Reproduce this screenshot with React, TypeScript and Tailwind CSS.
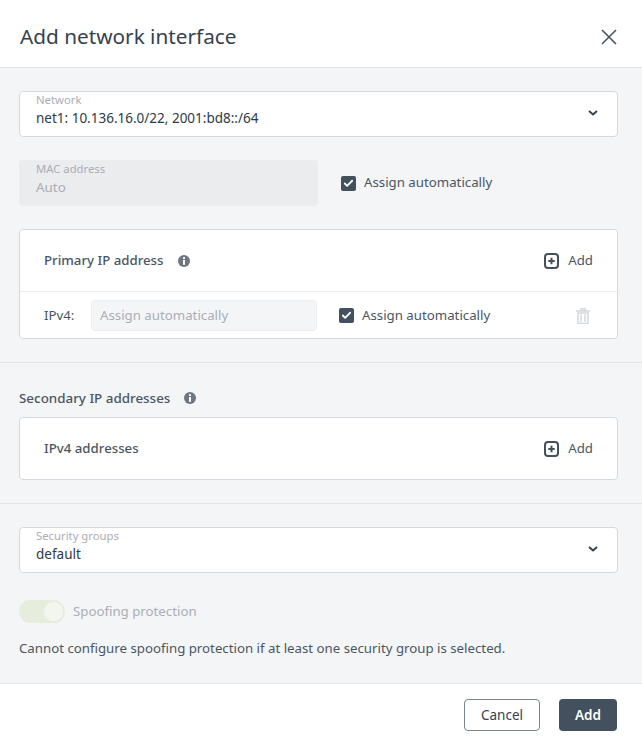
import React from "react";
import { Check } from "lucide-react";

const labelColor = "text-[#a9aeb6]";
const bodyText = "text-[13.25px] text-[#4b5663]";

const SelectField = ({ label, value }: { label: string; value: string }) => (
  <div className="h-[46px] bg-white border border-[#d5d9df] rounded-[4px] pl-4 pr-[19px] flex items-center justify-between">
    <div className="flex flex-col self-start pt-[1px]">
      <span className={`text-[11.3px] leading-[14px] ${labelColor}`}>{label}</span>
      <span className="mt-[1px] text-[13.5px] leading-[20px] text-[#2f3a45]">{value}</span>
    </div>
    <svg width="10" height="6" viewBox="0 0 10 6" className="text-[#36414e] -mt-[2px]">
      <path d="M1 1l4 3.5L9 1" fill="none" stroke="currentColor" strokeWidth="2" />
    </svg>
  </div>
);

const Checked = ({ text }: { text: string }) => (
  <div className="flex items-center gap-2">
    <span className="w-[15px] h-[15px] rounded-[2px] bg-[#43505e] flex items-center justify-center">
      <Check className="w-[11px] h-[11px] text-white" strokeWidth={4} />
    </span>
    <span className={bodyText}>{text}</span>
  </div>
);

const InfoDot = () => (
  <svg width="12" height="12" viewBox="0 0 12 12">
    <circle cx="6" cy="6" r="6" fill="#6d7681" />
    <rect x="5" y="2.2" width="2" height="1.8" fill="#fff" />
    <rect x="5" y="5" width="2" height="4.8" fill="#fff" />
  </svg>
);

const AddButton = () => (
  <div className="flex items-center gap-[9px]">
    <svg width="15" height="16" viewBox="0 0 15 16" className="text-[#43505e]">
      <rect x="1" y="1" width="13" height="14" rx="3" fill="none" stroke="currentColor" strokeWidth="2" />
      <path d="M7.5 4.8v6.4M4.3 8h6.4" fill="none" stroke="currentColor" strokeWidth="2" />
    </svg>
    <span className={bodyText}>Add</span>
  </div>
);

const TrashIcon = () => (
  <svg width="14" height="16" viewBox="0 0 14 16" className="ml-auto mr-[3px] text-[#d3d7dc]">
    <path d="M0 3h14M5 3V1h4v2" fill="none" stroke="currentColor" strokeWidth="1.5" />
    <path d="M2 5h10v10.5H2z M5 6.5v7.5M9 6.5v7.5" fill="none" stroke="currentColor" strokeWidth="1.5" />
  </svg>
);

export default function App() {
  return (
    <div className="w-[642px] h-[750px] flex flex-col bg-white font-['Noto_Sans',sans-serif]">
      <div className="h-[68px] shrink-0 pt-[7px] border-b border-[#e0e3e8] flex items-center justify-between pl-5 pr-[25px]">
        <h1 className="text-[20.75px] text-[#36414e] -mt-[1px]">Add network interface</h1>
        <svg width="16" height="16" viewBox="0 0 16 16" className="text-[#43505e]">
          <path d="M1 1l14 14M15 1L1 15" fill="none" stroke="currentColor" strokeWidth="1.5" />
        </svg>
      </div>

      <div className="flex-1 bg-[#f4f5f7] flex flex-col">
        <div className="pl-[19px] pr-[24px] pt-[23px] pb-[23px] border-b border-[#e3e5e9]">
          <SelectField label="Network" value="net1: 10.136.16.0/22, 2001:bd8::/64" />

          <div className="mt-[23px] flex items-center gap-[23px]">
            <div className="w-[299px] h-[46px] bg-[#ebecee] rounded-[4px] pl-[17px] pt-[2px] flex flex-col">
              <span className={`text-[11.3px] leading-[14px] ${labelColor}`}>MAC address</span>
              <span className={`mt-[1px] text-[13.4px] leading-[20px] ${labelColor}`}>Auto</span>
            </div>
            <Checked text="Assign automatically" />
          </div>

          <div className="mt-[23px] bg-white border border-[#d5d9df] rounded-[4px]">
            <div className="h-[62px] pl-6 pr-[24px] flex items-center justify-between border-b border-[#eceef1]">
              <div className="flex items-center gap-[14px]">
                <span className="text-[13.25px] font-medium text-[#4b5663]">Primary IP address</span>
                <InfoDot />
              </div>
              <AddButton />
            </div>
            <div className="h-[46px] px-6 pt-[1px] flex items-center">
              <span className={`w-[47px] ${bodyText}`}>IPv4:</span>
              <div className="w-[226px] h-[31px] bg-[#f4f5f7] border border-[#eceef1] rounded-[4px] pl-2 flex items-center">
                <span className={`text-[13.25px] ${labelColor}`}>Assign automatically</span>
              </div>
              <div className="ml-[22px]">
                <Checked text="Assign automatically" />
              </div>
              <TrashIcon />
            </div>
          </div>
        </div>

        <div className="pl-[19px] pr-[24px] pt-[25px] pb-[23px] border-b border-[#e3e5e9]">
          <div className="flex items-center gap-[14px] h-[20px]">
            <span className="text-[13.4px] font-medium text-[#4b5663]">Secondary IP addresses</span>
            <InfoDot />
          </div>
          <div className="mt-[9px] h-[63px] bg-white border border-[#d5d9df] rounded-[4px] pl-6 pr-[24px] flex items-center justify-between">
            <span className="text-[13.25px] font-medium text-[#4b5663]">IPv4 addresses</span>
            <AddButton />
          </div>
        </div>

        <div className="pl-[19px] pr-[24px] pt-[23px]">
          <SelectField label="Security groups" value="default" />
          <div className="mt-[27px] flex items-center gap-2">
            <span className="w-[46px] h-[23px] rounded-full bg-[#e6eddc] flex items-center justify-end pr-[2px]">
              <span className="w-[19px] h-[19px] rounded-full bg-[#f3f6ee]" />
            </span>
            <span className={`text-[13.25px] ${labelColor}`}>Spoofing protection</span>
          </div>
          <p className="mt-[15px] text-[13.25px] leading-[20px] text-[#4b5663]">
            Cannot configure spoofing protection if at least one security group is selected.
          </p>
        </div>
      </div>

      <div className="h-[67px] shrink-0 border-t border-[#e0e3e8] pt-[15px] flex items-start justify-end gap-[19px] pr-[25px]">
        <button className="w-[76px] h-[32px] rounded-[4px] border border-[#7b848e] text-[13.5px] text-[#36414e]">Cancel</button>
        <button className="w-[58px] h-[32px] rounded-[4px] bg-[#43505e] text-[13.5px] font-semibold text-white">Add</button>
      </div>
    </div>
  );
}
